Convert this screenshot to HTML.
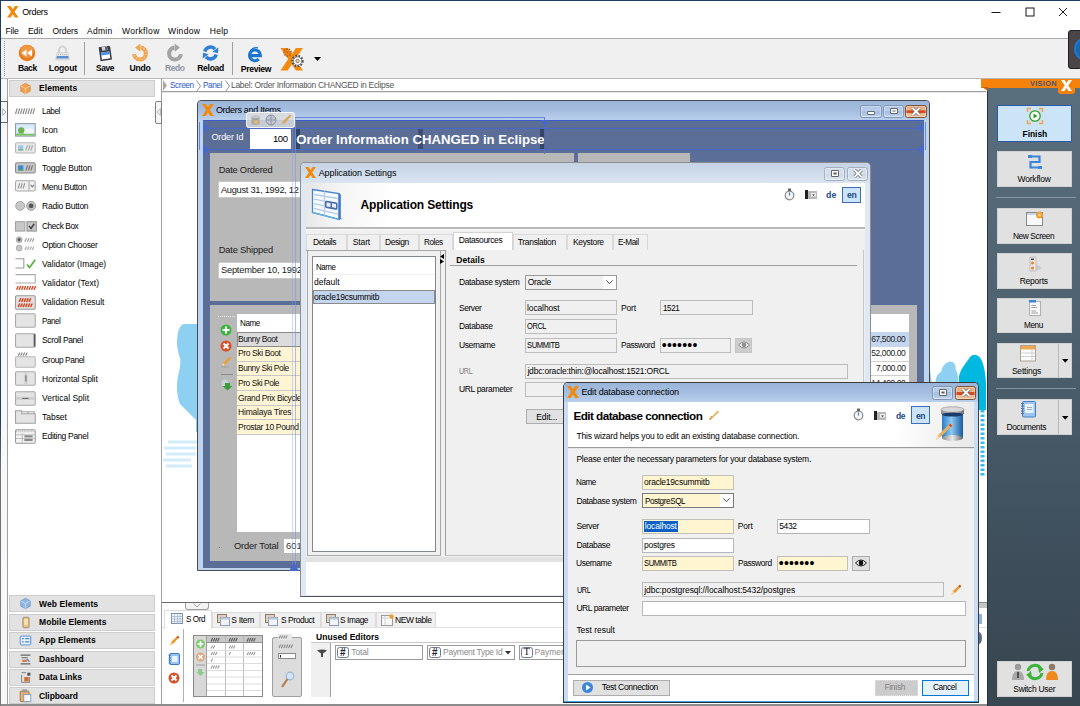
<!DOCTYPE html><html><head><meta charset="utf-8"><title>Orders</title><style>
*{box-sizing:border-box;margin:0;padding:0}
html,body{width:1080px;height:706px;overflow:hidden;background:#fff}
body{font-family:"Liberation Sans",sans-serif;font-size:8.5px;color:#000;position:relative}
div,svg{position:absolute}
svg{overflow:visible}
.t{white-space:nowrap}
.w{overflow:hidden}
.f{border:1px solid #b4b6ba;background:#fff}
.fd{border:1px solid #bcbcbc;background:#f0f0f0}
.fy{border:1px solid #c2c0b8;background:#fff5d0}
.btn{border:1px solid #adadad;background:#e1e1e1}
</style></head><body>
<div style="left:0px;top:0px;width:1080px;height:1px;background:#1d3c5f"></div>
<div style="left:0px;top:0px;width:1px;height:706px;background:linear-gradient(#1d3c5f 0,#1d3c5f 420px,#6a6f78 470px,#777 100%)"></div>
<svg style="left:7px;top:6px;" width="11.5" height="11.5" viewBox="0 0 12 12"><path d="M0 0H3.8L6 3.3L8.2 0H12L7.9 5.9L12 12H8.2L6 8.6L3.8 12H0L4.1 5.9Z" fill="#f28a0e"/></svg>
<div class="t" style="left:22.2px;top:7px;font-size:9px;line-height:10px;letter-spacing:-0.34px;">Orders</div>
<svg style="left:990px;top:6px;" width="12" height="12" viewBox="0 0 12 12"><path d="M1.5 6.5H10.5" stroke="#000" stroke-width=".9"/></svg>
<svg style="left:1024px;top:6px;" width="12" height="12" viewBox="0 0 12 12"><rect x="2" y="2" width="8" height="8" fill="none" stroke="#000" stroke-width=".9"/></svg>
<svg style="left:1057px;top:6px;" width="12" height="12" viewBox="0 0 12 12"><path d="M2 2L10 10M10 2L2 10" stroke="#000" stroke-width=".9"/></svg>
<div class="t" style="left:5.5px;top:26px;font-size:8.5px;line-height:10px;letter-spacing:-0.16px;">File</div>
<div class="t" style="left:27.9px;top:26px;font-size:8.5px;line-height:10px;letter-spacing:0.02px;">Edit</div>
<div class="t" style="left:52.6px;top:26px;font-size:8.5px;line-height:10px;letter-spacing:-0.12px;">Orders</div>
<div class="t" style="left:86.9px;top:26px;font-size:8.5px;line-height:10px;letter-spacing:0.33px;">Admin</div>
<div class="t" style="left:121.5px;top:26px;font-size:8.5px;line-height:10px;letter-spacing:0.34px;transform:scaleX(1.003);transform-origin:0px 50%;">Workflow</div>
<div class="t" style="left:168px;top:26px;font-size:8.5px;line-height:10px;letter-spacing:0.34px;transform:scaleX(1.002);transform-origin:0px 50%;">Window</div>
<div class="t" style="left:209.7px;top:26px;font-size:8.5px;line-height:10px;letter-spacing:0.31px;">Help</div>
<div style="left:1px;top:38px;width:1079px;height:41px;background:#f0f0f0;border-top:1px solid #a8a8a8;border-bottom:1px solid #b8b8b8"></div>
<div style="left:4px;top:41px;width:1px;height:35px;border-left:1px dotted #9a9a9a"></div>
<div style="left:84px;top:42px;width:1px;height:33px;background:#a0a0a0"></div>
<div style="left:232px;top:42px;width:1px;height:33px;background:#a0a0a0"></div>
<svg style="left:18px;top:44px;" width="18" height="18" viewBox="0 0 18 18"><circle cx="9" cy="9" r="8.3" fill="#e87a1c"/><circle cx="9" cy="7.5" r="6.5" fill="#f8b060" opacity=".55"/><path d="M3.5 9L8.5 5.5V12.5ZM9 9L14 5.5V12.5Z" fill="#fff"/></svg>
<div class="t" style="left:17.9px;top:63px;font-size:8.6px;line-height:10px;letter-spacing:-0.43px;font-weight:bold;color:#000;transform:scaleX(0.996);transform-origin:0px 50%;">Back</div>
<svg style="left:54px;top:44px;" width="17" height="18" viewBox="0 0 17 18"><path d="M5 9V6A3.5 3.5 0 0 1 12 6V9" fill="none" stroke="#d4d4d4" stroke-width="2.2"/><path d="M3 8.5H14L15.500 16H1.500Z" fill="#e2e2e2" stroke="#cfcfcf" stroke-width=".6"/><path d="M2.800 12H14.200L14.700 14.500H2.300Z" fill="#5a8ed0"/><path d="M4 10.500H13" stroke="#c4c4c4" stroke-width="1" stroke-dasharray="1 1"/></svg>
<div class="t" style="left:48.8px;top:63px;font-size:8.6px;line-height:10px;letter-spacing:-0.15px;font-weight:bold;color:#000;">Logout</div>
<svg style="left:97px;top:43.5px;" width="16" height="19" viewBox="0 0 16 19"><g transform="rotate(-8 8 9)"><path d="M2.500 2.500H13L14 3.500V16.500H2.500Z" fill="#3c3c44"/><rect x="4" y="8" width="8.500" height="7" fill="#fff"/><rect x="4" y="8" width="8.500" height="3" fill="#4c90e0"/><rect x="5.500" y="2.500" width="5.500" height="4" fill="#d0d4dc"/><rect x="9" y="3" width="1.500" height="3" fill="#3c3c44"/></g></svg>
<div class="t" style="left:96.1px;top:63px;font-size:8.6px;line-height:10px;letter-spacing:-0.43px;font-weight:bold;color:#000;transform:scaleX(0.979);transform-origin:0px 50%;">Save</div>
<svg style="transform:scale(1.14);left:130.5px;top:43.5px;" width="18" height="18" viewBox="0 0 18 18"><path d="M9.5 4.3A5.2 5.2 0 1 1 3.8 10.0" fill="none" stroke="#f0a552" stroke-width="3.6"/><path d="M9.3 0.7L9.1 7.9L4.7 4.1Z" fill="#f0a552"/><path d="M9.5 4.3A5.2 5.2 0 1 1 3.8 10.0" fill="none" stroke="#f8c88c" stroke-width="1.2" stroke-dasharray="1 1.6"/></svg>
<div class="t" style="left:129.5px;top:63px;font-size:8.6px;line-height:10px;letter-spacing:-0.22px;font-weight:bold;color:#000;">Undo</div>
<svg style="transform:scale(1.14);left:166px;top:43.5px;" width="18" height="18" viewBox="0 0 18 18"><path d="M8.5 4.3A5.2 5.2 0 1 0 14.2 10.0" fill="none" stroke="#a4a4a4" stroke-width="3.6"/><path d="M8.7 0.7L8.9 7.9L13.3 4.1Z" fill="#a4a4a4"/></svg>
<div class="t" style="left:164.9px;top:63px;font-size:8.6px;line-height:10px;letter-spacing:-0.43px;font-weight:bold;color:#8d96a6;transform:scaleX(0.995);transform-origin:0px 50%;">Redo</div>
<svg style="transform:scale(1.1);left:202px;top:44px;" width="17" height="18" viewBox="0 0 17 18"><path d="M3.3 7.6A5.4 5.4 0 0 1 12.6 5.5" fill="none" stroke="#2f7fd8" stroke-width="3.2"/><path d="M15.6 4.0L10.2 7.8L15.3 9.3Z" fill="#2f7fd8"/><path d="M13.7 10.4A5.4 5.4 0 0 1 4.4 12.5" fill="none" stroke="#2f7fd8" stroke-width="3.2"/><path d="M1.4 14.0L6.8 10.2L1.7 8.7Z" fill="#2f7fd8"/></svg>
<div class="t" style="left:197.2px;top:63px;font-size:8.6px;line-height:10px;letter-spacing:-0.31px;font-weight:bold;color:#000;">Reload</div>
<svg style="left:247px;top:46px;" width="16" height="17" viewBox="0 0 16 17"><path d="M3.200 9.600H13.400A5.400 5.400 0 1 0 11.800 13.200" stroke="#1b76d2" stroke-width="3.100" fill="none"/><path d="M2 7.500C3 3 7 1 11 1.800" stroke="#1b76d2" stroke-width="1.200" fill="none"/></svg>
<div class="t" style="left:240.7px;top:64px;font-size:8.6px;line-height:10px;letter-spacing:-0.27px;font-weight:bold;color:#000;">Preview</div>
<svg style="left:279.5px;top:47.5px;" width="23.5" height="22.5" viewBox="0 0 12 12"><path d="M0 0H3.8L6 3.3L8.2 0H12L7.9 5.9L12 12H8.2L6 8.6L3.8 12H0L4.1 5.9Z" fill="#f28a0e"/></svg>
<svg style="left:282px;top:47px;" width="24" height="24" viewBox="0 0 24 24"><circle cx="5.500" cy="5.500" r="3.400" fill="none" stroke="#b8601c" stroke-width="2" stroke-dasharray="1.300 1.100"/><circle cx="5.500" cy="5.500" r="1" fill="#b8601c"/><circle cx="15.500" cy="14" r="5.200" fill="#fff" stroke="#4a4a4a" stroke-width="1.900" stroke-dasharray="1.700 1.400"/><circle cx="15.500" cy="14" r="4.200" fill="#fff" stroke="#4a4a4a" stroke-width=".7"/><circle cx="15.500" cy="14" r="1.700" fill="#fbd8a8" stroke="#4a4a4a" stroke-width=".7"/></svg>
<svg style="left:314px;top:57px;" width="7" height="4" viewBox="0 0 7 4"><path d="M0 0H7L3.5 4Z" fill="#000"/></svg>
<div style="left:1068px;top:30px;width:14px;height:39px;background:#4b4548;border:1px solid #1e1e28;border-radius:3px"></div>
<div style="left:1074px;top:38px;width:20px;height:22px;border:2px solid #1a7ad8;border-radius:50%;background:#1d66a8"></div>
<div style="left:1px;top:79px;width:7px;height:627px;background:#f8f8f8"></div>
<div style="left:7px;top:79px;width:155px;height:627px;background:#fff;border-left:1px solid #a0a0a0;border-right:1px solid #a0a0a0"></div>
<div style="left:1px;top:100.5px;width:7px;height:22.5px;background:#f6f6f6;border:1px solid #6a6a6a;border-left:none"></div>
<svg style="left:2px;top:108px;" width="5" height="8" viewBox="0 0 5 8"><path d="M0.5 0.5L4 4L0.5 7.5Z" fill="#ececec" stroke="#b0b0b0" stroke-width=".8"/></svg>
<div style="left:155px;top:101px;width:7px;height:23px;background:#f6f6f6;border:1px solid #808080;border-radius:2px 0 0 2px"></div>
<svg style="left:156px;top:108px;" width="5" height="8" viewBox="0 0 5 8"><path d="M4.5 0.5L1 4L4.5 7.5Z" fill="#ececec" stroke="#b0b0b0" stroke-width=".8"/></svg>
<div style="left:9px;top:80px;width:146px;height:17px;background:#e2e2e2;border:1px solid #cdcdcd"></div>
<svg style="transform:scale(.88);left:19px;top:82px" width="13" height="13" viewBox="0 0 13 13"><path d="M6.5 0.5L12 3.5V9.5L6.5 12.5L1 9.5V3.5Z" fill="#f0a050" stroke="#d8802a" stroke-width=".6"/><path d="M1 3.5L6.5 6.5L12 3.5M6.5 6.5V12.5" stroke="#fbe0c0" stroke-width=".8" fill="none"/></svg>
<div class="t" style="left:39.1px;top:83px;font-size:8.5px;line-height:10px;letter-spacing:0.04px;font-weight:bold;">Elements</div>
<div style="left:9px;top:595px;width:146px;height:17px;background:#e2e2e2;border:1px solid #cdcdcd"></div>
<svg style="transform:scale(.88);left:19px;top:597px" width="13" height="13" viewBox="0 0 13 13"><path d="M6.5 0.5L12 3.5V9.5L6.5 12.5L1 9.5V3.5Z" fill="#8fb4de" stroke="#5a86c0" stroke-width=".6"/><path d="M1 3.5L6.5 6.5L12 3.5M6.5 6.5V12.5" stroke="#dce9f8" stroke-width=".8" fill="none"/></svg>
<div class="t" style="left:39.1px;top:599px;font-size:8.5px;line-height:10px;letter-spacing:0.09px;font-weight:bold;">Web Elements</div>
<div style="left:9px;top:614px;width:146px;height:17px;background:#e2e2e2;border:1px solid #cdcdcd"></div>
<svg style="transform:scale(.88);left:22px;top:616px" width="8" height="13" viewBox="0 0 8 13"><rect x=".5" y=".5" width="7" height="12" rx="1" fill="#f0c070" stroke="#8a8a8a"/><rect x="2" y="2.5" width="4" height="7" fill="#fbe4b0"/></svg>
<div class="t" style="left:39.1px;top:617px;font-size:8.5px;line-height:10px;letter-spacing:0.02px;font-weight:bold;">Mobile Elements</div>
<div style="left:9px;top:632px;width:146px;height:17px;background:#e2e2e2;border:1px solid #cdcdcd"></div>
<svg style="transform:scale(.88);left:19px;top:635px" width="13" height="11" viewBox="0 0 13 11"><rect x=".5" y=".5" width="12" height="10" rx="1" fill="#e8f1fc" stroke="#4a88d8"/><path d="M2.5 3.5H4.5M6 3.5H11M2.5 7H4.5M6 7H11" stroke="#4a88d8" stroke-width="1.4"/></svg>
<div class="t" style="left:39.1px;top:635px;font-size:8.5px;line-height:10px;letter-spacing:-0.01px;font-weight:bold;">App Elements</div>
<div style="left:9px;top:650.5px;width:146px;height:17px;background:#e2e2e2;border:1px solid #cdcdcd"></div>
<svg style="transform:scale(.88);left:19px;top:652.5px" width="13" height="13" viewBox="0 0 13 13"><path d="M1 1.5H12M2 4.5H9M1 11.5H12" stroke="#666" stroke-width="1.2"/><path d="M3 8H8" stroke="#e0702a" stroke-width="2.4"/><path d="M8 6L11 9" stroke="#4a88d8" stroke-width="1.6"/></svg>
<div class="t" style="left:39.1px;top:654px;font-size:8.5px;line-height:10px;letter-spacing:0.01px;font-weight:bold;">Dashboard</div>
<div style="left:9px;top:669px;width:146px;height:17px;background:#e2e2e2;border:1px solid #cdcdcd"></div>
<svg style="transform:scale(.88);left:20px;top:671px" width="12" height="13" viewBox="0 0 12 13"><path d="M1 1H6M1 3.5V12H10V6" stroke="#777" fill="none"/><rect x="4" y="6" width="5" height="5" fill="#d86a2a"/><rect x="7.5" y="1" width="3.5" height="3.5" fill="#555"/></svg>
<div class="t" style="left:39.1px;top:672px;font-size:8.5px;line-height:10px;letter-spacing:-0.02px;font-weight:bold;">Data Links</div>
<div style="left:9px;top:687px;width:146px;height:17px;background:#e2e2e2;border:1px solid #cdcdcd"></div>
<svg style="transform:scale(.88);left:19px;top:688px" width="13" height="15" viewBox="0 0 13 15"><rect x=".5" y="2.5" width="10" height="12" rx="1" fill="#e8b070" stroke="#a86a2a"/><rect x="3" y=".5" width="5" height="3.5" fill="#999"/><rect x="4.5" y="6.5" width="8" height="8" fill="#f8f8f8" stroke="#7a9ac8"/></svg>
<div class="t" style="left:39.1px;top:691px;font-size:8.5px;line-height:10px;letter-spacing:-0.11px;font-weight:bold;">Clipboard</div>
<svg style="left:14.8px;top:102px;" width="21.8" height="16.8" viewBox="0 0 21 16"><path transform="translate(0.5 6)" d="M1.6 0L0 5.5M4 0L2.4 5.5M6.4 0L4.8 5.5M8.8 0L7.2 5.5M11.2 0L9.6 5.5M13.6 0L12 5.5M16 0L14.4 5.5M18.4 0L16.8 5.5" stroke="#8a8a8a" stroke-width="1.1" fill="none"/></svg>
<div class="t" style="left:42.1px;top:106px;font-size:8.5px;line-height:10px;letter-spacing:-0.43px;transform:scaleX(0.963);transform-origin:0px 50%;">Label</div>
<svg style="left:14.8px;top:122px;" width="21.8" height="16.8" viewBox="0 0 21 16"><rect x=".5" y="1.5" width="19" height="12" fill="#d8ebfa" stroke="#8a9aa8"/><path d="M1 11H19V13H1Z" fill="#7cc060"/><circle cx="6" cy="8" r="3" fill="#6fb050"/><path d="M9 9Q13 3 18 8V11H9Z" fill="#f4f8fc"/></svg>
<div class="t" style="left:42.1px;top:125px;font-size:8.5px;line-height:10px;letter-spacing:-0.15px;">Icon</div>
<svg style="left:14.8px;top:140px;" width="21.8" height="16.8" viewBox="0 0 21 16"><rect x=".5" y="2.5" width="19" height="10" rx="1.5" fill="#e8e8e8" stroke="#b8b8b8"/><rect x="3" y="5" width="5" height="5" fill="#9cc8e8"/><path d="M3 9H8V10H3Z" fill="#6a6"/><path transform="translate(10.5 5)" d="M1.6 0L0 5M4 0L2.4 5M6.4 0L4.8 5" stroke="#aaa" stroke-width="1.1" fill="none"/></svg>
<div class="t" style="left:42.1px;top:144px;font-size:8.5px;line-height:10px;letter-spacing:-0.19px;">Button</div>
<svg style="left:14.8px;top:160px;" width="21.8" height="16.8" viewBox="0 0 21 16"><rect x=".5" y="2.5" width="19" height="10" rx="1.5" fill="#c8c8c8" stroke="#8a8a8a"/><rect x="3" y="5" width="5" height="5" fill="#3a8ad8"/><path d="M3 9H8V10H3Z" fill="#4a4"/><path transform="translate(10.5 5)" d="M1.6 0L0 5M4 0L2.4 5M6.4 0L4.8 5" stroke="#777" stroke-width="1.1" fill="none"/></svg>
<div class="t" style="left:42.1px;top:163px;font-size:8.5px;line-height:10px;letter-spacing:-0.17px;">Toggle Button</div>
<svg style="left:14.8px;top:178px;" width="21.8" height="16.8" viewBox="0 0 21 16"><rect x=".5" y="2.5" width="19" height="10" rx="1.5" fill="#f0f0f0" stroke="#a8a8a8"/><path d="M13.5 3V12" stroke="#a8a8a8"/><path d="M15 6.5L16.7 8.5L18.4 6.5" stroke="#777" fill="none"/><path transform="translate(3 5)" d="M1.6 0L0 5M4 0L2.4 5M6.4 0L4.8 5" stroke="#999" stroke-width="1.1" fill="none"/></svg>
<div class="t" style="left:42.1px;top:182px;font-size:8.5px;line-height:10px;letter-spacing:-0.33px;">Menu Button</div>
<svg style="left:14.8px;top:198px;" width="21.8" height="16.8" viewBox="0 0 21 16"><circle cx="5" cy="7.5" r="4.3" fill="#c8c8c8" stroke="#9a9a9a" stroke-width=".8"/><circle cx="15.5" cy="7.5" r="4.3" fill="#c8c8c8" stroke="#8a8a8a" stroke-width=".8"/><circle cx="15.5" cy="7.5" r="2.3" fill="#555"/></svg>
<div class="t" style="left:42.1px;top:201px;font-size:8.5px;line-height:10px;letter-spacing:-0.24px;">Radio Button</div>
<svg style="left:14.8px;top:218px;" width="21.8" height="16.8" viewBox="0 0 21 16"><rect x=".5" y="3.5" width="9" height="9" fill="#c8c8c8" stroke="#a0a0a0"/><rect x="11.5" y="3.5" width="9" height="9" fill="#c8c8c8" stroke="#909090"/><path d="M13.5 7.5L15.5 10L18.5 5.5" stroke="#444" stroke-width="1.5" fill="none"/></svg>
<div class="t" style="left:42.1px;top:221px;font-size:8.5px;line-height:10px;letter-spacing:-0.43px;transform:scaleX(0.976);transform-origin:0px 50%;">Check Box</div>
<svg style="left:14.8px;top:236px;" width="21.8" height="16.8" viewBox="0 0 21 16"><circle cx="4" cy="3.5" r="2.8" fill="#c0c0c0" stroke="#999" stroke-width=".7"/><circle cx="4" cy="3.5" r="1.4" fill="#555"/><circle cx="4" cy="11.5" r="2.8" fill="#c8c8c8" stroke="#999" stroke-width=".7"/><path transform="translate(9.5 2)" d="M1.6 0L0 3.5M4 0L2.4 3.5M6.4 0L4.8 3.5M8.8 0L7.2 3.5" stroke="#999" stroke-width="1.1" fill="none"/><path transform="translate(9.5 10)" d="M1.6 0L0 3.5M4 0L2.4 3.5M6.4 0L4.8 3.5M8.8 0L7.2 3.5" stroke="#aaa" stroke-width="1.1" fill="none"/></svg>
<div class="t" style="left:42.1px;top:240px;font-size:8.5px;line-height:10px;letter-spacing:-0.29px;">Option Chooser</div>
<svg style="left:14.8px;top:256px;" width="21.8" height="16.8" viewBox="0 0 21 16"><path d="M.5 2.5H8.5V11.5H.5" fill="#fff" stroke="#999"/><path d="M11.5 8L14 11L19.5 3.5" stroke="#4cb030" stroke-width="1.5" fill="none"/></svg>
<div class="t" style="left:42.1px;top:259px;font-size:8.5px;line-height:10px;letter-spacing:-0.03px;">Validator (Image)</div>
<svg style="left:14.8px;top:274px;" width="21.8" height="16.8" viewBox="0 0 21 16"><path d="M.5 .5H19.5V8.5H.5" fill="#fff" stroke="#aaa"/><path transform="translate(1.5 11.5)" d="M1.6 0L0 3.5M4 0L2.4 3.5M6.4 0L4.8 3.5M8.8 0L7.2 3.5M11.2 0L9.6 3.5M13.6 0L12 3.5M16 0L14.4 3.5M18.4 0L16.8 3.5" stroke="#d8401a" stroke-width="1.3" fill="none"/></svg>
<div class="t" style="left:42.1px;top:278px;font-size:8.5px;line-height:10px;letter-spacing:0.03px;">Validator (Text)</div>
<svg style="left:14.8px;top:294px;" width="21.8" height="16.8" viewBox="0 0 21 16"><rect x="0.5" y="1.5" width="19" height="13" rx="1" fill="#e0e0e0" stroke="#999"/><path transform="translate(4 4)" d="M1.6 0L0 3.5M4 0L2.4 3.5M6.4 0L4.8 3.5M8.8 0L7.2 3.5M11.2 0L9.6 3.5" stroke="#d8401a" stroke-width="1.4" fill="none"/><path transform="translate(3 9)" d="M1.6 0L0 3.5M4 0L2.4 3.5M6.4 0L4.8 3.5M8.8 0L7.2 3.5M11.2 0L9.6 3.5M13.6 0L12 3.5" stroke="#d8401a" stroke-width="1.4" fill="none"/></svg>
<div class="t" style="left:42.1px;top:297px;font-size:8.5px;line-height:10px;letter-spacing:-0.05px;">Validation Result</div>
<svg style="left:14.8px;top:312px;" width="21.8" height="16.8" viewBox="0 0 21 16"><rect x="0.5" y="1.5" width="19" height="13" rx="1" fill="#e4e4e4" stroke="#a8a8a8"/></svg>
<div class="t" style="left:42.1px;top:316px;font-size:8.5px;line-height:10px;letter-spacing:-0.43px;transform:scaleX(0.943);transform-origin:0px 50%;">Panel</div>
<svg style="left:14.8px;top:332px;" width="21.8" height="16.8" viewBox="0 0 21 16"><rect x="0.5" y="1.5" width="19" height="13" rx="1" fill="#e4e4e4" stroke="#a8a8a8"/><rect x="18" y="2" width="1.5" height="12" fill="#555"/></svg>
<div class="t" style="left:42.1px;top:335px;font-size:8.5px;line-height:10px;letter-spacing:-0.4px;">Scroll Panel</div>
<svg style="left:14.8px;top:352px;" width="21.8" height="16.8" viewBox="0 0 21 16"><rect x="0.5" y="4.5" width="19" height="10" rx="1" fill="#e4e4e4" stroke="#b8b8b8"/><path transform="translate(3 0.5)" d="M1.6 0L0 3M4 0L2.4 3M6.4 0L4.8 3M8.8 0L7.2 3" stroke="#888" stroke-width="1.1" fill="none"/></svg>
<div class="t" style="left:42.1px;top:355px;font-size:8.5px;line-height:10px;letter-spacing:-0.43px;transform:scaleX(0.984);transform-origin:0px 50%;">Group Panel</div>
<svg style="left:14.8px;top:370px;" width="21.8" height="16.8" viewBox="0 0 21 16"><rect x="0.5" y="1.5" width="19" height="13" rx="1" fill="#e4e4e4" stroke="#a8a8a8"/><rect x="9" y="2" width="3" height="12" fill="#d0d0d0"/><path d="M10.5 5V11" stroke="#666"/></svg>
<div class="t" style="left:42.1px;top:374px;font-size:8.5px;line-height:10px;letter-spacing:-0.1px;">Horizontal Split</div>
<svg style="left:14.8px;top:390px;" width="21.8" height="16.8" viewBox="0 0 21 16"><rect x="0.5" y="1.5" width="19" height="13" rx="1" fill="#e4e4e4" stroke="#a8a8a8"/><rect x="1" y="6.5" width="18" height="3" fill="#d0d0d0"/><path d="M7 8H13" stroke="#666"/></svg>
<div class="t" style="left:42.1px;top:393px;font-size:8.5px;line-height:10px;letter-spacing:0.01px;">Vertical Split</div>
<svg style="left:14.8px;top:408px;" width="21.8" height="16.8" viewBox="0 0 21 16"><path d="M.5 14.5V2.5H6.5V5.5H19.5V14.5Z" fill="#e4e4e4" stroke="#a0a0a0"/><path d="M6.5 3.5H18.5V5.5M12.5 3.5V5.5" stroke="#a0a0a0" fill="none"/></svg>
<div class="t" style="left:42.1px;top:412px;font-size:8.5px;line-height:10px;letter-spacing:-0.05px;">Tabset</div>
<svg style="left:14.8px;top:428px;" width="21.8" height="16.8" viewBox="0 0 21 16"><rect x="0.5" y="1.5" width="19" height="13" rx="1" fill="#f4f4f4" stroke="#999"/><path d="M1 3H19" stroke="#bbb" stroke-dasharray="1 1" stroke-width="2"/><path d="M1 6.5H19M1 10H19M7 5V14" stroke="#aaa" stroke-width=".7"/><rect x="9" y="7" width="8" height="2" fill="#888"/><rect x="9" y="10.5" width="8" height="2" fill="#888"/></svg>
<div class="t" style="left:42.1px;top:431px;font-size:8.5px;line-height:10px;letter-spacing:-0.3px;">Editing Panel</div>
<div style="left:162px;top:79px;width:824px;height:13px;background:#fff;border-bottom:1px solid #a0a0a0"></div>
<svg style="left:163px;top:80px;" width="5" height="11" viewBox="0 0 5 11"><path d="M0 0L4 5.5L0 11Z" fill="#a8a8a8"/></svg>
<div class="t" style="left:169.7px;top:80px;font-size:8.5px;line-height:10px;letter-spacing:-0.43px;color:#2a58c8;transform:scaleX(0.972);transform-origin:0px 50%;">Screen</div>
<svg style="left:196px;top:79.5px;" width="5" height="12" viewBox="0 0 5 12"><path d="M0.5 0.5L4.5 6L0.5 11.5" stroke="#888" fill="none" stroke-width=".9"/></svg>
<div class="t" style="left:202.6px;top:80px;font-size:8.5px;line-height:10px;letter-spacing:-0.43px;color:#2a58c8;transform:scaleX(0.963);transform-origin:0px 50%;">Panel</div>
<svg style="left:225px;top:79.5px;" width="5" height="12" viewBox="0 0 5 12"><path d="M0.5 0.5L4.5 6L0.5 11.5" stroke="#888" fill="none" stroke-width=".9"/></svg>
<div class="t" style="left:231px;top:80px;font-size:8.5px;line-height:10px;letter-spacing:-0.3px;color:#555;">Label: Order Information CHANGED in Eclipse</div>
<div style="left:162px;top:92px;width:824px;height:1px;background:#e8e8e8"></div>
<svg style="left:160px;top:300px;" width="40" height="200" viewBox="0 0 40 200"><path d="M38 24H24C20 25 18 30 17.500 36C16 44 18 52 20 58C21 63 20 68 18 76C16 86 17 96 20 104L36 120V132H38Z" fill="#8dd0f2"/><path d="M8 142h29M4 148h32M6 154h30M3 160h28M6 166h26" stroke="#d4ecf9" stroke-width="3"/></svg>
<svg style="left:925px;top:340px;" width="62" height="366" viewBox="0 0 62 366"><path d="M10.500 60V44C10.500 38 12 34 16 32C17 27 20 22 25 21.500C29 21.500 31 25 30.500 29C32 31 33.500 36 33.500 44V60Z" fill="#8dd0f2"/><path d="M5 30L7 44H5Z" fill="#8dd0f2"/><path d="M34 60V36C36 28 42 22 45 17C50 12 56 16 58 24C60 30 61 40 61 46V70H53V60Z" fill="#00b8e0"/><path d="M57.5 70V136" stroke="#1eb0e0" stroke-width="4" stroke-dasharray="2.500 2" opacity=".85"/></svg>
<div style="left:197px;top:100px;width:733px;height:471px;background:#bdd3ee;border:1px solid #4a4a4a;border-radius:4px 4px 0 0"></div>
<div style="left:198px;top:101px;width:731px;height:19px;background:linear-gradient(#9bb5d9,#a5bee0 50%,#b9d0ec);border-radius:4px 4px 0 0"></div>
<svg style="left:202px;top:104px;" width="12" height="12" viewBox="0 0 12 12"><path d="M0 0H3.8L6 3.3L8.2 0H12L7.9 5.9L12 12H8.2L6 8.6L3.8 12H0L4.1 5.9Z" fill="#f28a0e"/></svg>
<div class="t" style="left:215.9px;top:105px;font-size:9px;line-height:10px;letter-spacing:-0.29px;">Orders and Items</div>
<div style="left:860px;top:104.5px;width:21.5px;height:13px;background:linear-gradient(#aec7e6,#b9d0ec 40%,#a3bfe2 46%,#a9c4e5 70%,#c3d8f1);border:1px solid #8196b4;border-radius:2.5px;box-shadow:inset 0 0 0 1px rgba(255,255,255,.35)"></div>
<div style="left:866.5px;top:111px;width:8.5px;height:3.5px;background:#fff;border:1px solid #6a6a6a;border-radius:1px"></div>
<div style="left:882.5px;top:104.5px;width:21.5px;height:13px;background:linear-gradient(#aec7e6,#b9d0ec 40%,#a3bfe2 46%,#a9c4e5 70%,#c3d8f1);border:1px solid #8196b4;border-radius:2.5px;box-shadow:inset 0 0 0 1px rgba(255,255,255,.35)"></div>
<div style="left:889.5px;top:107.5px;width:8px;height:6.5px;background:#5a5a66;border:1px solid #666;box-shadow:inset 0 0 0 1.4px #fff;border-radius:1px"></div>
<div style="left:905px;top:104.5px;width:21.5px;height:13px;background:linear-gradient(#e6a574,#ebb58c 38%,#d84a1e 42%,#d84a1e 64%,#ecb890 68%,#f0c09a);border:1px solid #7e5238;border-radius:2.5px;box-shadow:inset 0 0 0 1px rgba(255,255,255,.35)"></div>
<svg style="left:911px;top:106.5px;" width="10" height="9" viewBox="0 0 10 9"><path d="M1.5 1L8.5 8M8.5 1L1.5 8" stroke="#6a6a6a" stroke-width="3.2"/><path d="M1.5 1L8.5 8M8.5 1L1.5 8" stroke="#fff" stroke-width="1.8"/></svg>
<div style="left:203px;top:120px;width:721px;height:448px;background:#5b6e98;border-top:1px solid #3c5cc8"></div>
<div class="t" style="left:211.4px;top:132px;font-size:9px;line-height:10px;letter-spacing:-0.13px;color:#fff;">Order Id</div>
<div style="left:250px;top:128px;width:41px;height:21px;background:#fff"></div>
<div class="t" style="left:272.6px;top:133px;font-size:9.6px;line-height:11px;letter-spacing:-0.48px;transform:scaleX(0.996);transform-origin:0px 50%;">100</div>
<div style="left:296px;top:128px;width:4px;height:21px;background:rgba(40,55,80,.75)"></div>
<div style="left:418px;top:128px;width:5px;height:21px;background:rgba(40,55,80,.55)"></div>
<div style="left:540px;top:128px;width:5px;height:21px;background:rgba(40,55,80,.75)"></div>
<div class="t" style="left:296.3px;top:132px;font-size:13.2px;line-height:15px;letter-spacing:0.02px;font-weight:bold;color:#fff;">Order Information CHANGED in Eclipse</div>
<div style="left:210px;top:153px;width:364px;height:148px;background:#b8b8b8"></div>
<div style="left:578px;top:153px;width:112px;height:148px;background:#b8b8b8"></div>
<div style="left:210px;top:305px;width:707px;height:256px;background:#b8b8b8"></div>
<div class="t" style="left:218.7px;top:165px;font-size:9.3px;line-height:10px;letter-spacing:-0.21px;color:#1a1a1a;">Date Ordered</div>
<div style="left:217.5px;top:181px;width:140px;height:17px;background:#fff;border:1px solid #cacaca;border-radius:2px"></div>
<div class="t" style="left:220.9px;top:185px;font-size:9.3px;line-height:10px;letter-spacing:-0.29px;color:#1a1a1a;">August 31, 1992, 12</div>
<div class="t" style="left:218.7px;top:245px;font-size:9.3px;line-height:10px;letter-spacing:-0.17px;color:#1a1a1a;">Date Shipped</div>
<div style="left:217.5px;top:261.5px;width:140px;height:17px;background:#fff;border:1px solid #cacaca;border-radius:2px"></div>
<div class="t" style="left:220.9px;top:265px;font-size:9.3px;line-height:10px;letter-spacing:-0.19px;color:#1a1a1a;">September 10, 1992</div>
<div style="left:218px;top:316px;width:17px;height:1px;border-top:1px dotted #e8e8e8"></div>
<svg style="left:220px;top:324px;" width="12" height="12" viewBox="0 0 12 12"><circle cx="6" cy="6" r="5.5" fill="#3cb43c"/><path d="M6 2.5V9.5M2.5 6H9.5" stroke="#fff" stroke-width="2"/></svg>
<svg style="left:220px;top:340px;" width="12" height="12" viewBox="0 0 12 12"><circle cx="6" cy="6" r="5.5" fill="#d8502a"/><path d="M3.5 3.5L8.5 8.5M8.5 3.5L3.5 8.5" stroke="#fff" stroke-width="2"/></svg>
<svg style="left:220px;top:355px;" width="13" height="13" viewBox="0 0 13 13"><path d="M2 11L3 8L9.5 1.5L11.5 3.5L5 10Z" fill="#e8a040"/><path d="M2 11L3 8L5 10Z" fill="#f0d8b0"/><path d="M1 12H9" stroke="#999" stroke-width=".8"/></svg>
<div style="left:221px;top:374px;width:12px;height:1px;background:#8a8a8a"></div>
<svg style="left:220px;top:378px;" width="13" height="13" viewBox="0 0 13 13"><circle cx="5" cy="5" r="3.5" fill="#c8d0d8"/><path d="M5 5H10V8H12.5L7.5 12.5L2.5 8H5Z" fill="#3c9c3c"/></svg>
<div style="left:237px;top:314px;width:671.5px;height:218px;background:#fff"></div>
<div class="t" style="left:240.1px;top:318px;font-size:8.5px;line-height:10px;letter-spacing:-0.43px;transform:scaleX(0.953);transform-origin:0px 50%;">Name</div>
<div style="left:237px;top:332px;width:634px;height:15px;background:#dcdcdc;border:1px solid #8a8a8a"></div>
<div style="left:871px;top:332px;width:37.5px;height:15px;background:#c3d6ee"></div>
<div class="t" style="left:238.1px;top:334px;font-size:8.5px;line-height:10px;letter-spacing:-0.43px;color:#111;transform:scaleX(0.995);transform-origin:0px 50%;">Bunny Boot</div>
<div class="t" style="left:871.2px;top:334px;font-size:8.5px;line-height:10px;letter-spacing:-0.4px;color:#222;">67,500.00</div>
<div style="left:237px;top:347px;width:635px;height:15px;background:#fff5d5;border-bottom:1px solid #c8c8c8"></div>
<div style="left:871px;top:347px;width:37.5px;height:15px;background:#fff;border-bottom:1px solid #d0d0d0"></div>
<div class="t" style="left:238.1px;top:348px;font-size:8.5px;line-height:10px;letter-spacing:-0.4px;color:#111;">Pro Ski Boot</div>
<div class="t" style="left:871.2px;top:348px;font-size:8.5px;line-height:10px;letter-spacing:-0.4px;color:#222;">52,000.00</div>
<div style="left:237px;top:362px;width:635px;height:14px;background:#fff5d5;border-bottom:1px solid #c8c8c8"></div>
<div style="left:871px;top:362px;width:37.5px;height:14px;background:#fff;border-bottom:1px solid #d0d0d0"></div>
<div class="t" style="left:238.1px;top:363px;font-size:8.5px;line-height:10px;letter-spacing:-0.43px;color:#111;transform:scaleX(0.984);transform-origin:0px 50%;">Bunny Ski Pole</div>
<div class="t" style="left:875.8px;top:363px;font-size:8.5px;line-height:10px;letter-spacing:-0.43px;color:#222;transform:scaleX(0.996);transform-origin:0px 50%;">7,000.00</div>
<div style="left:237px;top:376px;width:635px;height:15px;background:#fff5d5;border-bottom:1px solid #c8c8c8"></div>
<div style="left:871px;top:376px;width:37.5px;height:15px;background:#fff;border-bottom:1px solid #d0d0d0"></div>
<div class="t" style="left:238.1px;top:378px;font-size:8.5px;line-height:10px;letter-spacing:-0.43px;color:#111;transform:scaleX(0.988);transform-origin:0px 50%;">Pro Ski Pole</div>
<div class="t" style="left:871.2px;top:378px;font-size:8.5px;line-height:10px;letter-spacing:-0.4px;color:#222;">14,400.00</div>
<div style="left:237px;top:391px;width:635px;height:15px;background:#fff5d5;border-bottom:1px solid #c8c8c8"></div>
<div style="left:871px;top:391px;width:37.5px;height:15px;background:#fff;border-bottom:1px solid #d0d0d0"></div>
<div class="t" style="left:238.1px;top:393px;font-size:8.5px;line-height:10px;letter-spacing:-0.38px;color:#111;">Grand Prix Bicycle</div>
<div style="left:237px;top:406px;width:635px;height:14px;background:#fff5d5;border-bottom:1px solid #c8c8c8"></div>
<div style="left:871px;top:406px;width:37.5px;height:14px;background:#fff;border-bottom:1px solid #d0d0d0"></div>
<div class="t" style="left:238.1px;top:407px;font-size:8.5px;line-height:10px;letter-spacing:-0.22px;color:#111;">Himalaya Tires</div>
<div style="left:237px;top:420px;width:635px;height:15px;background:#fff5d5;border-bottom:1px solid #c8c8c8"></div>
<div style="left:871px;top:420px;width:37.5px;height:15px;background:#fff;border-bottom:1px solid #d0d0d0"></div>
<div class="t" style="left:238.1px;top:422px;font-size:8.5px;line-height:10px;letter-spacing:-0.35px;color:#111;">Prostar 10 Pound</div>
<div class="t" style="left:233.9px;top:541px;font-size:9.3px;line-height:10px;letter-spacing:-0.12px;color:#1a1a1a;">Order Total</div>
<div style="left:219px;top:547px;width:1px;height:1px;background:#777"></div>
<div style="left:284px;top:538.5px;width:60px;height:14.5px;background:#fff"></div>
<div class="t" style="left:286.1px;top:541px;font-size:9.3px;line-height:10px;color:#333;">601</div>
<div style="left:203px;top:127.5px;width:721px;height:1px;background:#4a68c8"></div>
<div style="left:203px;top:149px;width:721px;height:1px;background:#4a68c8"></div>
<svg style="left:203px;top:122px;" width="7" height="11" viewBox="0 0 7 11"><path d="M0 0L7 5.5L0 11Z" fill="#4a68c8"/></svg>
<svg style="left:203px;top:144px;" width="7" height="11" viewBox="0 0 7 11"><path d="M0 0L7 5.5L0 11Z" fill="#4a68c8"/></svg>
<svg style="left:917px;top:122px;" width="7" height="11" viewBox="0 0 7 11"><path d="M7 0L0 5.5L7 11Z" fill="#4a68c8"/></svg>
<svg style="left:917px;top:144px;" width="7" height="11" viewBox="0 0 7 11"><path d="M7 0L0 5.5L7 11Z" fill="#4a68c8"/></svg>
<div style="left:199px;top:122px;width:1px;height:28px;background:#6a88d8"></div>
<div style="left:925px;top:122px;width:1px;height:28px;background:#6a88d8"></div>
<div style="left:292px;top:118px;width:1px;height:452px;background:rgba(130,160,235,.4)"></div>
<div style="left:295px;top:118px;width:1px;height:452px;background:rgba(120,150,230,.6)"></div>
<div style="left:544px;top:118px;width:1px;height:36px;background:rgba(80,110,210,.8)"></div>
<div style="left:295px;top:117px;width:250px;height:1px;background:#6a88e0"></div>
<svg style="left:540.5px;top:120px;" width="8" height="7" viewBox="0 0 8 7"><path d="M0 0H8L4 7Z" fill="#4a68c8"/></svg>
<svg style="left:289px;top:562px;" width="10" height="9" viewBox="0 0 10 9"><path d="M0 9H10L5 0Z" fill="#4a68c8"/></svg>
<div style="left:246px;top:112px;width:49px;height:16px;background:rgba(225,225,225,.82);border:1px solid rgba(250,250,250,.9);border-radius:3px"></div>
<svg style="left:250px;top:114px;" width="11" height="12" viewBox="0 0 11 12"><path d="M1.5 2.5H9.5V10Q5.5 12 1.5 10Z" fill="#a8a8a8"/><ellipse cx="5.5" cy="2.5" rx="4" ry="1.5" fill="#c8c8c8"/><circle cx="6" cy="8" r="2" fill="#e8b868"/></svg>
<svg style="left:265px;top:114px;" width="12" height="12" viewBox="0 0 12 12"><circle cx="6" cy="6" r="5" fill="#c0c4cc" stroke="#8a92a4"/><path d="M1 6H11M6 1V11" stroke="#8a92a4" stroke-width=".8"/></svg>
<svg style="left:280px;top:113px;" width="13" height="13" viewBox="0 0 13 13"><path d="M1.5 11.5L3 8L10 1.5L11.5 3L5 10Z" fill="#dca860"/></svg>
<div style="left:300px;top:162px;width:571px;height:435px;background:#dfe8f5;border:1px solid #8e8e8e;border-radius:5px 5px 0 0;border-bottom-color:#555"></div>
<div style="left:301px;top:163px;width:569px;height:20px;background:linear-gradient(#c5d3e5,#cfdcec 50%,#dbe5f1);border-radius:4px 4px 0 0"></div>
<svg style="left:305px;top:167px;" width="11" height="11" viewBox="0 0 12 12"><path d="M0 0H3.8L6 3.3L8.2 0H12L7.9 5.9L12 12H8.2L6 8.6L3.8 12H0L4.1 5.9Z" fill="#f28a0e"/></svg>
<div class="t" style="left:318.7px;top:168px;font-size:9px;line-height:10px;letter-spacing:-0.07px;">Application Settings</div>
<div style="left:823.5px;top:167px;width:21px;height:13.5px;background:linear-gradient(#cfdbea,#d6e1ee 45%,#ccd8e8 50%,#dde7f2);border:1px solid #a4aebc;border-radius:2.5px;box-shadow:inset 0 0 0 1px rgba(255,255,255,.35)"></div>
<div style="left:830.5px;top:170px;width:8px;height:6.5px;background:#5a5a66;border:1px solid #666;box-shadow:inset 0 0 0 1.4px #fff;border-radius:1px"></div>
<div style="left:846.5px;top:167px;width:21px;height:13.5px;background:linear-gradient(#cfdbea,#d6e1ee 45%,#ccd8e8 50%,#dde7f2);border:1px solid #a4aebc;border-radius:2.5px;box-shadow:inset 0 0 0 1px rgba(255,255,255,.35)"></div>
<svg style="left:852.5px;top:169px;" width="10" height="9" viewBox="0 0 10 9"><path d="M1.5 1L8.5 8M8.5 1L1.5 8" stroke="#6a6a6a" stroke-width="3.2"/><path d="M1.5 1L8.5 8M8.5 1L1.5 8" stroke="#fff" stroke-width="1.8"/></svg>
<div style="left:306px;top:183px;width:559px;height:412px;background:#f0f0f0"></div>
<div style="left:306px;top:183px;width:559px;height:44px;background:linear-gradient(100deg,#e6e6e6 0%,#f4f4f4 6%,#fff 16%)"></div>
<div style="left:306px;top:227px;width:559px;height:1.5px;background:#b8b8b8"></div>
<div style="left:306px;top:229px;width:559px;height:1px;background:#fafafa"></div>
<svg style="left:311px;top:187px;" width="32" height="34" viewBox="0 0 32 34"><path d="M30 33.500L32 32L30 30Z" fill="#bbb" opacity=".6"/><path d="M1.500 2.500L28 6.500V32.500L1.500 25.500Z" fill="#f6f9fd" stroke="#4a86c8" stroke-width="1.300"/><path d="M28 6.500L29.500 7.500V32L28 32.500Z" fill="#3a78c8" stroke="#3a78c8" stroke-width=".6"/><path d="M3 7.5L27 11.5M3 12.1L27 16.7M3 16.7L27 21.9M3 21.3L27 27.1M13.500 4.500V28.500" stroke="#b4cdea" stroke-width="1.300" fill="none"/><path d="M1.500 25.500L28 32.500" stroke="#56b8e8" stroke-width="1.200"/><rect x="14" y="14.500" width="12.500" height="7.500" rx="1.800" fill="#4a6eaa" transform="skewY(9) translate(0 -3.200)"/><rect x="15.500" y="16.200" width="4" height="4" fill="#e8f0fa" transform="skewY(9) translate(0 -3.200)"/><rect x="21" y="16.200" width="4" height="4" fill="#e8f0fa" transform="skewY(9) translate(0 -3.200)"/></svg>
<div class="t" style="left:360.5px;top:198px;font-size:12px;line-height:14px;letter-spacing:-0.17px;font-weight:bold;">Application Settings</div>
<svg style="left:784px;top:187.5px;" width="11" height="13" viewBox="0 0 11 13"><circle cx="5.5" cy="7.5" r="4.3" fill="#f4f4f4" stroke="#8a8a8a" stroke-width="1.2"/><rect x="4" y=".5" width="3" height="2.5" fill="#666"/><path d="M5.5 7.5V4.5" stroke="#4a7ac0" stroke-width="1.2"/></svg>
<svg style="left:805px;top:190px;" width="12" height="9" viewBox="0 0 12 9"><rect x="0" y="1" width="12" height="8" fill="#b8b8b8"/><rect x="0" y="0" width="3" height="9" fill="#222"/><rect x="6" y="3" width="5" height="3.5" fill="#eee"/><path d="M7 4.5L8.5 6L10 4.500Z" fill="#333"/></svg>
<div class="t" style="left:826.1px;top:190px;font-size:8.8px;line-height:10px;letter-spacing:-0.07px;font-weight:bold;color:#1c4a86;">de</div>
<div style="left:842px;top:187px;width:19px;height:16px;background:#cce4f7;border:1px solid #3c6cb8"></div>
<div class="t" style="left:846.5px;top:190px;font-size:8.8px;line-height:10px;letter-spacing:-0.44px;font-weight:bold;color:#1c4a86;transform:scaleX(0.987);transform-origin:0px 50%;">en</div>
<div style="left:306px;top:234px;width:41px;height:16px;background:#f0f0f0;border:1px solid #d9d9d9;border-bottom:none"></div>
<div class="t" style="left:312.9px;top:237px;font-size:8.5px;line-height:10px;letter-spacing:-0.43px;transform:scaleX(0.999);transform-origin:0px 50%;">Details</div>
<div style="left:347px;top:234px;width:33px;height:16px;background:#f0f0f0;border:1px solid #d9d9d9;border-bottom:none"></div>
<div class="t" style="left:352.8px;top:237px;font-size:8.5px;line-height:10px;letter-spacing:-0.14px;">Start</div>
<div style="left:380px;top:234px;width:39px;height:16px;background:#f0f0f0;border:1px solid #d9d9d9;border-bottom:none"></div>
<div class="t" style="left:384.9px;top:237px;font-size:8.5px;line-height:10px;letter-spacing:-0.43px;transform:scaleX(0.990);transform-origin:0px 50%;">Design</div>
<div style="left:419px;top:234px;width:34px;height:16px;background:#f0f0f0;border:1px solid #d9d9d9;border-bottom:none"></div>
<div class="t" style="left:424px;top:237px;font-size:8.5px;line-height:10px;letter-spacing:-0.43px;transform:scaleX(0.958);transform-origin:0px 50%;">Roles</div>
<div style="left:453px;top:232px;width:60px;height:19px;background:#fff;border:1px solid #d4d4d4;border-bottom:none"></div>
<div class="t" style="left:458.8px;top:235px;font-size:8.5px;line-height:10px;letter-spacing:-0.38px;">Datasources</div>
<div style="left:513px;top:234px;width:54px;height:16px;background:#f0f0f0;border:1px solid #d9d9d9;border-bottom:none"></div>
<div class="t" style="left:517.8px;top:237px;font-size:8.5px;line-height:10px;letter-spacing:-0.33px;">Translation</div>
<div style="left:567px;top:234px;width:46px;height:16px;background:#f0f0f0;border:1px solid #d9d9d9;border-bottom:none"></div>
<div class="t" style="left:573px;top:237px;font-size:8.5px;line-height:10px;letter-spacing:-0.35px;">Keystore</div>
<div style="left:613px;top:234px;width:34.5px;height:16px;background:#f0f0f0;border:1px solid #d9d9d9;border-bottom:none"></div>
<div class="t" style="left:618.2px;top:237px;font-size:8.5px;line-height:10px;letter-spacing:-0.43px;transform:scaleX(0.961);transform-origin:0px 50%;">E-Mail</div>
<div style="left:306px;top:250px;width:147px;height:1px;background:#a8a8a8"></div>
<div style="left:513px;top:250px;width:351px;height:1px;background:#a8a8a8"></div>
<div style="left:307px;top:251px;width:134px;height:305px;background:#f0f0f0;border:1px solid #a8a8a8;border-top:none"></div>
<div style="left:312px;top:256px;width:124px;height:296px;background:#fff;border:1px solid #828790"></div>
<div class="t" style="left:315.9px;top:262px;font-size:8.5px;line-height:10px;letter-spacing:-0.43px;transform:scaleX(0.934);transform-origin:0px 50%;">Name</div>
<div style="left:313px;top:274px;width:122px;height:1px;background:#f0f0f0"></div>
<div class="t" style="left:314px;top:277px;font-size:8.5px;line-height:10px;letter-spacing:0.01px;">default</div>
<div style="left:313px;top:290px;width:122px;height:14px;background:#c4d5ee;border:1px solid #8a8a8a"></div>
<div class="t" style="left:314px;top:292px;font-size:8.5px;line-height:10px;letter-spacing:-0.24px;">oracle19csummitb</div>
<svg style="left:440px;top:254px;" width="4" height="10" viewBox="0 0 4 10"><path d="M4 0L0 2.5L4 5Z" fill="#000"/><path d="M0 5L4 7.5L0 10Z" fill="#000"/></svg>
<div style="left:445px;top:250px;width:419px;height:306px;border:1px solid #a0a0a0;border-top:none;border-right-color:#c8c8c8;border-bottom-color:#c0c0c0;background:#f0f0f0"></div>
<div style="left:306px;top:557px;width:559px;height:5px;background:#e2e2e2"></div>
<div style="left:306px;top:562px;width:559px;height:33px;background:#fff"></div>
<div class="t" style="left:456.3px;top:255px;font-size:8.5px;line-height:10px;letter-spacing:0.09px;font-weight:bold;">Details</div>
<div style="left:450px;top:265px;width:407px;height:1px;background:#a0a0a0"></div>
<div class="t" style="left:458.9px;top:277px;font-size:8.5px;line-height:10px;letter-spacing:-0.34px;">Database system</div>
<div class="fd" style="left:525px;top:274.5px;width:92px;height:15px;border-color:#9a9a9a;"></div>
<div style="left:602.5px;top:275.5px;width:13.5px;height:13px;background:#fdfdfd"></div>
<svg style="left:605.5px;top:279.8px;" width="7" height="4.5" viewBox="0 0 7 4.5"><path d="M.4 .4L3.500 3.700L6.600 .4" stroke="#4a4a4a" fill="none" stroke-width="1"/></svg>
<div class="t" style="left:527.8px;top:277px;font-size:8.5px;line-height:10px;letter-spacing:-0.33px;">Oracle</div>
<div class="t" style="left:458.9px;top:303px;font-size:8.5px;line-height:10px;letter-spacing:-0.43px;transform:scaleX(1.000);transform-origin:0px 50%;">Server</div>
<div class="fd" style="left:525px;top:300px;width:92px;height:14.5px;"></div>
<div class="t" style="left:527px;top:303px;font-size:8.5px;line-height:10px;letter-spacing:-0.12px;">localhost</div>
<div class="t" style="left:620.9px;top:303px;font-size:8.5px;line-height:10px;letter-spacing:-0.16px;">Port</div>
<div class="fd" style="left:660px;top:300px;width:92.5px;height:14.5px;"></div>
<div class="t" style="left:662.7px;top:303px;font-size:8.5px;line-height:10px;letter-spacing:-0.43px;transform:scaleX(0.947);transform-origin:0px 50%;">1521</div>
<div class="t" style="left:458.9px;top:321px;font-size:8.5px;line-height:10px;letter-spacing:-0.33px;">Database</div>
<div class="fd" style="left:525px;top:319px;width:92px;height:14.5px;"></div>
<div class="t" style="left:527px;top:321px;font-size:8.5px;line-height:10px;letter-spacing:-0.43px;transform:scaleX(0.873);transform-origin:0px 50%;">ORCL</div>
<div class="t" style="left:458.9px;top:340px;font-size:8.5px;line-height:10px;letter-spacing:-0.37px;">Username</div>
<div class="fd" style="left:525px;top:338px;width:92px;height:14.5px;"></div>
<div class="t" style="left:527.2px;top:340px;font-size:8.5px;line-height:10px;letter-spacing:-0.43px;transform:scaleX(0.895);transform-origin:0px 50%;">SUMMITB</div>
<div class="t" style="left:620.9px;top:340px;font-size:8.5px;line-height:10px;letter-spacing:-0.43px;transform:scaleX(0.993);transform-origin:0px 50%;">Password</div>
<div class="fd" style="left:660px;top:338px;width:71px;height:14.5px;"></div>
<div class="t" style="left:661.8px;top:337px;font-size:14px;line-height:16px;letter-spacing:0.2px;">•••••••</div>
<div style="left:735px;top:337.5px;width:17px;height:15px;background:#cdcdcd;border:1px solid #c4c4c4"></div>
<svg style="left:738px;top:341px;" width="12" height="8" viewBox="0 0 12 8"><path d="M.5 4Q6 -2 11.5 4Q6 10 .5 4Z" fill="#f0f0f0" stroke="#909090"/><circle cx="6" cy="4" r="2.3" fill="#909090"/></svg>
<div class="t" style="left:459.3px;top:366px;font-size:8.5px;line-height:10px;letter-spacing:-0.43px;color:#808080;transform:scaleX(0.848);transform-origin:0px 50%;">URL</div>
<div class="fd" style="left:525px;top:364px;width:323px;height:14.5px;"></div>
<div class="t" style="left:527.41px;top:366px;font-size:8.5px;line-height:10px;letter-spacing:-0.19px;">jdbc:oracle:thin:@localhost:1521:ORCL</div>
<div class="t" style="left:458.9px;top:384px;font-size:8.5px;line-height:10px;letter-spacing:-0.32px;">URL parameter</div>
<div class="fd" style="left:525px;top:382px;width:323px;height:14.5px;"></div>
<div class="btn" style="left:526px;top:408.5px;width:37.5px;height:15.5px;"></div>
<div class="t" style="left:536.3px;top:412px;font-size:8.5px;line-height:10px;letter-spacing:-0.12px;">Edit...</div>
<div style="left:162px;top:597px;width:824px;height:5px;background:#fff"></div>
<div style="left:162px;top:602px;width:824px;height:1px;background:#6a6a6a"></div>
<div style="left:162px;top:603px;width:824px;height:103px;background:#fff"></div>
<div style="left:185px;top:603px;width:24px;height:7px;background:#f4f4f4;border:1px solid #a0a0a0;border-top:none;border-radius:0 0 3px 3px"></div>
<svg style="left:193px;top:603px;" width="8" height="5" viewBox="0 0 8 5"><path d="M.5 .5L4 4L7.5 .5" stroke="#999" fill="none" stroke-width=".9"/></svg>
<div style="left:162px;top:627px;width:824px;height:1px;background:#e0e0e0"></div>
<div style="left:164px;top:610px;width:48px;height:19px;background:#fff;border:1px solid #dcdcdc;border-bottom:none"></div>
<svg style="left:171px;top:613px;" width="12" height="11" viewBox="0 0 12 11"><rect x=".5" y=".5" width="11" height="10" fill="#f4f8fc" stroke="#7a90b0"/><path d="M.5 3.5H11.5M.5 6H11.5M.5 8.5H11.5M3.5 .5V10.5M6.5 .5V10.5M9 .5V10.5" stroke="#9ab0d0" stroke-width=".7"/></svg>
<div class="t" style="left:185.8px;top:614px;font-size:8.5px;line-height:10px;letter-spacing:-0.43px;transform:scaleX(0.951);transform-origin:0px 50%;">S Ord</div>
<div style="left:212px;top:612px;width:48px;height:15px;background:#f0f0f0;border:1px solid #dcdcdc;border-bottom:none"></div>
<svg style="left:217px;top:614px;" width="13" height="12" viewBox="0 0 13 12"><rect x=".5" y=".5" width="9" height="8" fill="#e0d0c0" stroke="#8a7a6a"/><rect x="3.5" y="3.5" width="9" height="8" fill="#f0f4fa" stroke="#8a9ab0"/><rect x="3.5" y="3.5" width="9" height="2" fill="#b8c8dc"/></svg>
<div class="t" style="left:231.3px;top:615px;font-size:8.5px;line-height:10px;letter-spacing:-0.33px;">S Item</div>
<div style="left:260px;top:612px;width:61px;height:15px;background:#f0f0f0;border:1px solid #dcdcdc;border-bottom:none"></div>
<svg style="left:265px;top:614px;" width="13" height="12" viewBox="0 0 13 12"><rect x=".5" y=".5" width="9" height="8" fill="#e0d0c0" stroke="#8a7a6a"/><rect x="3.5" y="3.5" width="9" height="8" fill="#f0f4fa" stroke="#8a9ab0"/><rect x="3.5" y="3.5" width="9" height="2" fill="#b8c8dc"/></svg>
<div class="t" style="left:280.5px;top:615px;font-size:8.5px;line-height:10px;letter-spacing:-0.43px;transform:scaleX(0.993);transform-origin:0px 50%;">S Product</div>
<div style="left:321px;top:612px;width:55px;height:15px;background:#f0f0f0;border:1px solid #dcdcdc;border-bottom:none"></div>
<svg style="left:326px;top:614px;" width="13" height="12" viewBox="0 0 13 12"><rect x=".5" y=".5" width="9" height="8" fill="#e0d0c0" stroke="#8a7a6a"/><rect x="3.5" y="3.5" width="9" height="8" fill="#f0f4fa" stroke="#8a9ab0"/><rect x="3.5" y="3.5" width="9" height="2" fill="#b8c8dc"/></svg>
<div class="t" style="left:340.2px;top:615px;font-size:8.5px;line-height:10px;letter-spacing:-0.43px;transform:scaleX(0.979);transform-origin:0px 50%;">S Image</div>
<div style="left:376px;top:612px;width:60px;height:15px;background:#f0f0f0;border:1px solid #dcdcdc;border-bottom:none"></div>
<svg style="left:381px;top:614px;" width="13" height="12" viewBox="0 0 13 12"><rect x=".5" y="1.5" width="11" height="10" fill="#f8f8f8" stroke="#9a9a9a"/><path d="M4 1.5V11.5M.5 4H11.5" stroke="#c8c8c8" stroke-width=".7"/><circle cx="10.5" cy="2.5" r="2.2" fill="#f0a030"/></svg>
<div class="t" style="left:395.2px;top:615px;font-size:8.5px;line-height:10px;letter-spacing:-0.43px;transform:scaleX(0.994);transform-origin:0px 50%;">NEW table</div>
<svg style="left:168px;top:634px;" width="13" height="13" viewBox="0 0 13 13"><path d="M1.5 11.5L3 8L10 1.5L11.5 3L5 10Z" fill="#e89a30"/><path d="M1.5 11.5L3 8L5 10Z" fill="#f4dcb4"/><path d="M9 2.5L10.5 4" stroke="#b04a2a" stroke-width="1.4"/></svg>
<svg style="left:168px;top:653px;" width="12" height="12" viewBox="0 0 12 12"><rect x="1.5" y=".5" width="10" height="11" rx="1.5" fill="#9cc4f0" stroke="#3a78c8"/><rect x="4" y="3" width="5.5" height="6" fill="#e8f2fc"/><path d="M.5 2.5H3M.5 5H3M.5 7.5H3M.5 10H3" stroke="#3a78c8" stroke-width=".8"/></svg>
<svg style="left:168px;top:672px;" width="12" height="12" viewBox="0 0 12 12"><circle cx="6" cy="6" r="5.5" fill="#d4502a"/><path d="M3.5 3.5L8.5 8.5M8.5 3.5L3.5 8.5" stroke="#fff" stroke-width="2"/></svg>
<div style="left:183px;top:629px;width:1px;height:73px;background:#b0b0b0"></div>
<div style="left:193px;top:635px;width:70px;height:62px;background:#fff;border:1px solid #8a8a8a"></div>
<div style="left:194px;top:636px;width:13px;height:60px;background:#d8d8d8;border-right:1px solid #a0a0a0"></div>
<div style="left:207px;top:636px;width:55px;height:7px;background:#c8c8c8;border-bottom:1px solid #909090"></div>
<svg style="left:194px;top:636px;" width="68" height="60" viewBox="0 0 68 60"><path d="M31.5 0V60M49.5 0V60" stroke="#b0b0b0" stroke-width=".8"/><path d="M13 14.5H68M13 21H68M13 27.5H68M13 34.5H68M13 41H68M13 48H68M13 54.5H68" stroke="#d4d4d4" stroke-width=".8"/><circle cx="6.5" cy="8" r="4.5" fill="#7ccc6c"/><path d="M6.5 5V11M3.5 8H9.5" stroke="#fff" stroke-width="1.6"/><circle cx="6.5" cy="21" r="4.5" fill="#e0a880"/><path d="M4.5 19L8.5 23M8.5 19L4.5 23" stroke="#fff" stroke-width="1.6"/><path d="M2 29H11" stroke="#a0a0a0"/><path d="M4 33H8V36H10.5L6.5 40L2.5 36H4Z" fill="#8ccc8c"/><path transform="translate(17 2)" d="M1.6 0L0 3.5M3.8 0L2.2 3.5M6 0L4.4 3.5M8.2 0L6.6 3.5" stroke="#555" stroke-width="1.1" fill="none"/><path transform="translate(35 2)" d="M1.6 0L0 3.5M3.8 0L2.2 3.5M6 0L4.4 3.5M8.2 0L6.6 3.5" stroke="#555" stroke-width="1.1" fill="none"/><path transform="translate(53 2)" d="M1.6 0L0 3.5M3.8 0L2.2 3.5M6 0L4.4 3.5M8.2 0L6.6 3.5" stroke="#555" stroke-width="1.1" fill="none"/><path transform="translate(17 9.5)" d="M1.6 0L0 3M3.8 0L2.2 3" stroke="#999" stroke-width="1.1" fill="none"/><path transform="translate(35 9.5)" d="M1.6 0L0 3M3.8 0L2.2 3M6 0L4.4 3" stroke="#999" stroke-width="1.1" fill="none"/><path transform="translate(17 16)" d="M1.6 0L0 3M3.8 0L2.2 3M6 0L4.4 3" stroke="#999" stroke-width="1.1" fill="none"/><path transform="translate(35 16)" d="M1.6 0L0 3" stroke="#999" stroke-width="1.1" fill="none"/><path transform="translate(53 16)" d="M1.6 0L0 3M3.8 0L2.2 3M6 0L4.4 3M8.2 0L6.6 3" stroke="#999" stroke-width="1.1" fill="none"/><path transform="translate(17 22.5)" d="M1.6 0L0 3" stroke="#999" stroke-width="1.1" fill="none"/><path transform="translate(17 29.5)" d="M1.6 0L0 3M3.8 0L2.2 3M6 0L4.4 3M8.2 0L6.6 3" stroke="#999" stroke-width="1.1" fill="none"/></svg>
<div style="left:272px;top:637px;width:30px;height:60px;background:#dcdcdc;border:1px solid #a0a0a0;border-radius:2px"></div>
<div style="left:278px;top:634px;width:14px;height:6px;background:#e8e8e8"></div>
<svg style="left:272px;top:634px;" width="30" height="62" viewBox="0 0 30 62"><path transform="translate(7 1.5)" d="M1.6 0L0 3M3.8 0L2.2 3M6 0L4.4 3M8.2 0L6.6 3" stroke="#888" stroke-width="1.1" fill="none"/><path transform="translate(7 10.5)" d="M1.6 0L0 3.5M4 0L2.4 3.5M6.4 0L4.8 3.5M8.8 0L7.2 3.5M11.2 0L9.6 3.5M13.6 0L12 3.5" stroke="#888" stroke-width="1.1" fill="none"/><rect x="6.5" y="19.5" width="17" height="5" fill="#fff" stroke="#8a8a8a"/><path d="M8.5 21V23.5" stroke="#222"/><circle cx="18" cy="42" r="3.8" fill="#cfe4f8" stroke="#9ab4d0" stroke-width="1.2"/><path d="M15.5 45L10 53" stroke="#b87a4a" stroke-width="2.2"/></svg>
<div class="t" style="left:316.1px;top:632px;font-size:8.5px;line-height:10px;letter-spacing:0.01px;font-weight:bold;">Unused Editors</div>
<div style="left:311px;top:642px;width:252px;height:1px;background:#c8c8c8"></div>
<div style="left:311px;top:643px;width:19px;height:54px;background:#f0f0f0"></div>
<div style="left:330px;top:643px;width:1px;height:54px;background:#a0a0a0"></div>
<svg style="left:316.5px;top:648.5px;" width="10" height="8" viewBox="0 0 10 8"><path d="M0 1.500Q5 -.500 10 1.500L6 4.500V8H4V4.500Z" fill="#4a4a4a"/></svg>
<div style="left:335px;top:645px;width:88px;height:14.5px;background:#fff;border:1px solid #9a9a9a"></div>
<div style="left:337px;top:646.5px;width:11.5px;height:11.5px;border:1px solid #6a7a94;border-radius:2.5px;background:#fff"></div>
<div class="t" style="left:339.92px;top:647px;font-size:10px;line-height:11px;font-weight:bold;color:#223;">#</div>
<div class="t" style="left:351.3px;top:647px;font-size:8.5px;line-height:10px;letter-spacing:-0.14px;color:#8a8a8a;">Total</div>
<div style="left:427px;top:645px;width:88px;height:14.5px;background:#fff;border:1px solid #9a9a9a"></div>
<div style="left:429px;top:646.5px;width:11.5px;height:11.5px;border:1px solid #6a7a94;border-radius:2.5px;background:#fff"></div>
<div class="t" style="left:431.92px;top:647px;font-size:10px;line-height:11px;font-weight:bold;color:#223;">#</div>
<div class="t" style="left:443.1px;top:647px;font-size:8.5px;line-height:10px;letter-spacing:-0.29px;color:#8a8a8a;">Payment Type Id</div>
<svg style="left:505px;top:651px;" width="6" height="4" viewBox="0 0 6 4"><path d="M0 0H6L3 3.5Z" fill="#333"/></svg>
<div style="left:519px;top:645px;width:88px;height:14.5px;background:#fff;border:1px solid #9a9a9a"></div>
<div style="left:521px;top:646.5px;width:11.5px;height:11.5px;border:1px solid #6a7a94;border-radius:2.5px;background:#fff"></div>
<div class="t" style="left:523.49px;top:646px;font-size:10.5px;line-height:12px;color:#223;font-family:'Liberation Serif',serif;">T</div>
<div class="t" style="left:534.6px;top:647px;font-size:8.5px;line-height:10px;color:#8a8a8a;">Payment</div>
<div style="left:162px;top:704px;width:918px;height:2px;background:#8c8c8c"></div>
<div style="left:1px;top:704px;width:162px;height:2px;background:#8c8c8c"></div>
<div style="left:563px;top:382px;width:416px;height:321px;background:#c9dcf3;border:1px solid #3c3c3c;border-radius:5px 5px 0 0;border-bottom-color:#1e2a3a"></div>
<div style="left:564px;top:383px;width:414px;height:19px;background:linear-gradient(#9bb5d9,#a5bee0 50%,#b9d0ec);border-radius:4px 4px 0 0"></div>
<div style="left:564px;top:701px;width:414px;height:1px;background:#3fa8dc"></div>
<svg style="left:567px;top:386px;" width="12" height="12" viewBox="0 0 12 12"><path d="M0 0H3.8L6 3.3L8.2 0H12L7.9 5.9L12 12H8.2L6 8.6L3.8 12H0L4.1 5.9Z" fill="#f28a0e"/></svg>
<div class="t" style="left:581.4px;top:387px;font-size:9px;line-height:10px;letter-spacing:-0.15px;">Edit database connection</div>
<div style="left:931.5px;top:386px;width:21.5px;height:13.5px;background:linear-gradient(#aec7e6,#b9d0ec 40%,#a3bfe2 46%,#a9c4e5 70%,#c3d8f1);border:1px solid #8196b4;border-radius:2.5px;box-shadow:inset 0 0 0 1px rgba(255,255,255,.35)"></div>
<div style="left:938.5px;top:389px;width:8px;height:6.5px;background:#5a5a66;border:1px solid #666;box-shadow:inset 0 0 0 1.4px #fff;border-radius:1px"></div>
<div style="left:954.5px;top:386px;width:21.5px;height:13.5px;background:linear-gradient(#e6a574,#ebb58c 38%,#d84a1e 42%,#d84a1e 64%,#ecb890 68%,#f0c09a);border:1px solid #7e5238;border-radius:2.5px;box-shadow:inset 0 0 0 1px rgba(255,255,255,.35)"></div>
<svg style="left:960.5px;top:388px;" width="10" height="9" viewBox="0 0 10 9"><path d="M1.5 1L8.5 8M8.5 1L1.5 8" stroke="#6a6a6a" stroke-width="3.2"/><path d="M1.5 1L8.5 8M8.5 1L1.5 8" stroke="#fff" stroke-width="1.8"/></svg>
<div style="left:568px;top:402px;width:406px;height:299px;background:#f0f0f0"></div>
<div style="left:568px;top:402px;width:406px;height:45px;background:linear-gradient(100deg,#fff 80%,#e8e8e8)"></div>
<div style="left:568px;top:446.5px;width:406px;height:1px;background:#9c9c9c"></div>
<div style="left:568px;top:447.5px;width:406px;height:1px;background:#e4e4e4"></div>
<div class="t" style="left:573.4px;top:409px;font-size:11.7px;line-height:13px;letter-spacing:-0.53px;font-weight:bold;">Edit database connection</div>
<svg style="left:708px;top:409px;" width="12" height="12" viewBox="0 0 12 12"><path d="M1 10.5L9.5 1.5L11 3L2.5 11Z" fill="#e8b868"/><path d="M1 10.5L2 9L3 10Z" fill="#a86a2a"/><circle cx="3.5" cy="8" r="1" fill="#f09030"/></svg>
<div class="t" style="left:576.4px;top:431px;font-size:8.5px;line-height:10px;letter-spacing:-0.17px;">This wizard helps you to edit an existing database connection.</div>
<div class="t" style="left:576.4px;top:454px;font-size:8.5px;line-height:10px;letter-spacing:-0.22px;">Please enter the necessary parameters for your database system.</div>
<svg style="left:853px;top:408px;" width="11" height="13" viewBox="0 0 11 13"><circle cx="5.5" cy="7.5" r="4.3" fill="#f4f4f4" stroke="#8a8a8a" stroke-width="1.2"/><rect x="4" y=".5" width="3" height="2.5" fill="#666"/><path d="M5.5 7.5V4.5" stroke="#4a7ac0" stroke-width="1.2"/></svg>
<svg style="left:874px;top:411px;" width="12" height="9" viewBox="0 0 12 9"><rect x="0" y="1" width="12" height="8" fill="#b8b8b8"/><rect x="0" y="0" width="3" height="9" fill="#222"/><rect x="6" y="3" width="5" height="3.5" fill="#eee"/><path d="M7 4.5L8.5 6L10 4.500Z" fill="#333"/></svg>
<div class="t" style="left:895.7px;top:411px;font-size:8.8px;line-height:10px;letter-spacing:-0.44px;font-weight:bold;color:#1c4a86;transform:scaleX(0.966);transform-origin:0px 50%;">de</div>
<div style="left:911px;top:406px;width:19px;height:18px;background:#cce4f7;border:1px solid #3c6cb8"></div>
<div class="t" style="left:915.6px;top:411px;font-size:8.8px;line-height:10px;letter-spacing:-0.44px;font-weight:bold;color:#1c4a86;transform:scaleX(0.977);transform-origin:0px 50%;">en</div>
<svg style="left:934px;top:406px;" width="32" height="37" viewBox="0 0 32 37"><defs><linearGradient id="cy" x1="0" x2="1"><stop offset="0" stop-color="#2a7ac8"/><stop offset=".45" stop-color="#8ccaf4"/><stop offset="1" stop-color="#1a5aa0"/></linearGradient><linearGradient id="cap" x1="0" x2="1"><stop offset="0" stop-color="#8a8a8a"/><stop offset=".5" stop-color="#e8e8e8"/><stop offset="1" stop-color="#6a6a6a"/></linearGradient></defs><rect x="8" y="6" width="21" height="26" fill="url(#cy)"/><ellipse cx="18.5" cy="32" rx="10.5" ry="3" fill="url(#cap)"/><rect x="7" y="3" width="23" height="5" fill="url(#cap)"/><ellipse cx="18.5" cy="3.5" rx="11.5" ry="2.8" fill="#d8d8d8" stroke="#8a8a8a" stroke-width=".6"/><ellipse cx="18.5" cy="8.5" rx="10.5" ry="2" fill="#1a3a6a"/><path d="M2 34L4 29L17 17L19 19L6 31.5Z" fill="#e8b060"/><path d="M2 34L4 29L6 31.5Z" fill="#f4e0c0"/><path d="M15.5 18.5L17.5 20.5" stroke="#d8402a" stroke-width="2"/></svg>
<div class="t" style="left:576.4px;top:477px;font-size:8.5px;line-height:10px;letter-spacing:-0.43px;transform:scaleX(0.953);transform-origin:0px 50%;">Name</div>
<div class="fy" style="left:642px;top:475px;width:92px;height:14.5px;"></div>
<div class="t" style="left:644.1px;top:477px;font-size:8.5px;line-height:10px;letter-spacing:-0.23px;">oracle19csummitb</div>
<div class="t" style="left:576.4px;top:496px;font-size:8.5px;line-height:10px;letter-spacing:-0.37px;">Database system</div>
<div class="fy" style="left:642px;top:493px;width:92px;height:15px;border-color:#7a7a7a;"></div>
<div style="left:719.5px;top:494px;width:13.5px;height:13px;background:#fff"></div>
<svg style="left:722.5px;top:498.3px;" width="7" height="4.5" viewBox="0 0 7 4.5"><path d="M.4 .4L3.500 3.700L6.600 .4" stroke="#4a4a4a" fill="none" stroke-width="1"/></svg>
<div class="t" style="left:644.8px;top:496px;font-size:8.5px;line-height:10px;letter-spacing:-0.43px;transform:scaleX(0.956);transform-origin:0px 50%;">PostgreSQL</div>
<div class="t" style="left:576.4px;top:521px;font-size:8.5px;line-height:10px;letter-spacing:-0.43px;transform:scaleX(1.000);transform-origin:0px 50%;">Server</div>
<div class="fy" style="left:642px;top:519px;width:92px;height:15px;"></div>
<div style="left:643.6px;top:521.4px;width:34.3px;height:10.4px;background:#0a5fc8"></div>
<div class="t" style="left:644.8px;top:521px;font-size:8.5px;line-height:10px;letter-spacing:-0.17px;color:#fff;">localhost</div>
<div class="t" style="left:737.7px;top:521px;font-size:8.5px;line-height:10px;letter-spacing:-0.16px;">Port</div>
<div class="f" style="left:777px;top:519px;width:93px;height:15px;"></div>
<div class="t" style="left:779.2px;top:521px;font-size:8.5px;line-height:10px;letter-spacing:-0.37px;">5432</div>
<div class="t" style="left:576.4px;top:540px;font-size:8.5px;line-height:10px;letter-spacing:-0.33px;">Database</div>
<div class="f" style="left:642px;top:537.5px;width:92px;height:15px;"></div>
<div class="t" style="left:644.1px;top:540px;font-size:8.5px;line-height:10px;letter-spacing:-0.24px;">postgres</div>
<div class="t" style="left:576.4px;top:558px;font-size:8.5px;line-height:10px;letter-spacing:-0.43px;transform:scaleX(0.991);transform-origin:0px 50%;">Username</div>
<div class="fy" style="left:642px;top:556px;width:92px;height:14.5px;"></div>
<div class="t" style="left:644.1px;top:558px;font-size:8.5px;line-height:10px;letter-spacing:-0.43px;transform:scaleX(0.898);transform-origin:0px 50%;">SUMMITB</div>
<div class="t" style="left:737.7px;top:558px;font-size:8.5px;line-height:10px;letter-spacing:-0.43px;transform:scaleX(0.993);transform-origin:0px 50%;">Password</div>
<div class="fy" style="left:777px;top:556px;width:71px;height:14.5px;"></div>
<div class="t" style="left:778.8px;top:555px;font-size:14px;line-height:16px;letter-spacing:0.2px;">•••••••</div>
<div style="left:852px;top:555.5px;width:17.5px;height:15.5px;background:#e1e1e1;border:1px solid #adadad"></div>
<svg style="left:855px;top:559px;" width="12" height="8" viewBox="0 0 12 8"><path d="M.5 4Q6 -2 11.5 4Q6 10 .5 4Z" fill="#fff" stroke="#111"/><circle cx="6" cy="4" r="2.4" fill="#111"/></svg>
<div class="t" style="left:576.8px;top:585px;font-size:8.5px;line-height:10px;letter-spacing:-0.43px;transform:scaleX(0.848);transform-origin:0px 50%;">URL</div>
<div class="fd" style="left:642px;top:582px;width:302px;height:15px;"></div>
<div class="t" style="left:644.31px;top:585px;font-size:8.5px;line-height:10px;letter-spacing:-0.08px;">jdbc:postgresql://localhost:5432/postgres</div>
<svg style="left:950px;top:583px;" width="13" height="13" viewBox="0 0 13 13"><path d="M1.5 11.5L3 8L10 1.5L11.5 3L5 10Z" fill="#e89a30"/><path d="M1.5 11.5L3 8L5 10Z" fill="#f4dcb4"/><path d="M9 2.5L10.5 4" stroke="#b04a2a" stroke-width="1.4"/></svg>
<div class="t" style="left:576.4px;top:603px;font-size:8.5px;line-height:10px;letter-spacing:-0.42px;">URL parameter</div>
<div class="f" style="left:642px;top:601px;width:324px;height:14.5px;"></div>
<div class="t" style="left:576.4px;top:625px;font-size:8.5px;line-height:10px;letter-spacing:-0.03px;">Test result</div>
<div style="left:576px;top:639.5px;width:390px;height:27px;border:1px solid #9a9a9a;background:#f0f0f0"></div>
<div style="left:568px;top:674px;width:406px;height:1px;background:#a0a0a0"></div>
<div style="left:568px;top:675px;width:406px;height:26px;background:#fff"></div>
<div class="btn" style="left:573px;top:679.5px;width:96.5px;height:16px;"></div>
<svg style="left:582px;top:682px;" width="11" height="11" viewBox="0 0 11 11"><circle cx="5.5" cy="5.5" r="5.5" fill="#3a86dc"/><path d="M4 2.5L8.5 5.5L4 8.5Z" fill="#fff"/></svg>
<div class="t" style="left:601.7px;top:682px;font-size:8.5px;line-height:10px;letter-spacing:-0.31px;">Test Connection</div>
<div style="left:874.5px;top:679.5px;width:43px;height:16px;background:#cccccc;border:1px dotted #e0e0e0"></div>
<div class="t" style="left:884.4px;top:682px;font-size:8.5px;line-height:10px;letter-spacing:-0.3px;color:#838383;">Finish</div>
<div style="left:922px;top:679.5px;width:47px;height:16px;background:#e5f1fb;border:1px solid #0078d7"></div>
<div class="t" style="left:932.8px;top:682px;font-size:8.5px;line-height:10px;letter-spacing:-0.43px;transform:scaleX(0.982);transform-origin:0px 50%;">Cancel</div>
<div style="left:979px;top:602px;width:8px;height:104px;overflow:hidden"><div style="left:0;top:0;width:8px;height:6px;background:#c4c4c4;border-top:1px solid #8a8a8a"></div><div style="left:0;top:12px;width:2.5px;height:10px;background:#8ab4e0"></div><div style="left:-3px;top:30px;width:6px;height:12px;background:#5a6a8a;border-radius:50%"></div></div>
<div style="left:987px;top:87px;width:93px;height:619px;background:linear-gradient(#5a6f7e,#4d616f 40%,#3c4c59 80%,#37464f);border-left:1px solid #26323c"></div>
<div style="left:981px;top:79px;width:99px;height:9px;background:#f5830b"></div>
<svg style="left:981px;top:87px;" width="7" height="5" viewBox="0 0 7 5"><path d="M1 0H7V4Z" fill="#c8600a"/></svg>
<div style="left:1058px;top:79px;width:17px;height:15px;background:#f5830b;border-radius:0 0 3px 3px"></div>
<div class="t" style="left:1030.3px;top:80px;font-size:6.6px;line-height:7px;letter-spacing:0.26px;font-weight:bold;color:#4a5878;transform:scaleX(1.123);transform-origin:0px 50%;">VISION</div>
<svg style="left:1061px;top:80px;" width="11" height="11" viewBox="0 0 12 12"><path d="M0 0H3.8L6 3.3L8.2 0H12L7.9 5.9L12 12H8.2L6 8.6L3.8 12H0L4.1 5.9Z" fill="#fff"/></svg>
<div style="left:997px;top:105px;width:75px;height:37px;background:#cce4f7;border:1px solid #2c5aa8"></div>
<div class="t" style="left:1022.6px;top:129px;font-size:8.5px;line-height:10px;letter-spacing:-0.08px;font-weight:bold;">Finish</div>
<svg style="left:1026.5px;top:108px" width="16" height="16" viewBox="0 0 16 16"><path d="M.5 4V.5H4M12 .5H15.5V4M15.5 12V15.5H12M4 15.5H.5V12" stroke="#f0a050" stroke-width="1.4" fill="none"/><rect x="2" y="2" width="12" height="12" fill="#d8dce0"/><circle cx="8" cy="8" r="5.2" fill="#fff" stroke="#2aa02a" stroke-width="1.3"/><path d="M6.5 5.5L10.5 8L6.5 10.5Z" fill="#2aa02a"/></svg>
<div style="left:997px;top:151px;width:75px;height:36px;background:#e1e1e1;border:1px solid #d0d0d0"></div>
<div class="t" style="left:1017.5px;top:174px;font-size:8.5px;line-height:10px;letter-spacing:-0.19px;">Workflow</div>
<svg style="left:1026.5px;top:154px" width="16" height="16" viewBox="0 0 16 16"><path d="M2 2.5H12.5V8H3.5V13.5H14" stroke="#3a86dc" stroke-width="2.2" fill="none"/><rect x="1" y="1" width="4" height="3" fill="#3a86dc"/><rect x="11" y="12" width="4" height="3" fill="#3a86dc"/></svg>
<div style="left:996px;top:197px;width:80px;height:1px;background:#8494a0"></div>
<div style="left:997px;top:207.5px;width:75px;height:36.5px;background:#e1e1e1;border:1px solid #d0d0d0"></div>
<div class="t" style="left:1013.2px;top:231px;font-size:8.5px;line-height:10px;letter-spacing:-0.43px;transform:scaleX(0.982);transform-origin:0px 50%;">New Screen</div>
<svg style="left:1025.5px;top:210.5px" width="18" height="16" viewBox="0 0 18 16"><rect x=".5" y="1.5" width="16" height="13" fill="#f8f8f8" stroke="#8a8a8a"/><rect x="1" y="2" width="15" height="2" fill="#c8d4e4"/><circle cx="13.5" cy="4" r="3.5" fill="#f0a030"/><circle cx="13.5" cy="4" r="1.2" fill="#fbe0b0"/></svg>
<div style="left:997px;top:253px;width:75px;height:35.5px;background:#e1e1e1;border:1px solid #d0d0d0"></div>
<div class="t" style="left:1019.7px;top:276px;font-size:8.5px;line-height:10px;letter-spacing:-0.24px;">Reports</div>
<svg style="left:1026.5px;top:256px" width="16" height="17" viewBox="0 0 16 17"><path d="M3 1H9V15H3Z" fill="#e8e8e8" stroke="#c0c0c0"/><path d="M9 8L15 12L9 15Z" fill="#c8c8c8"/><circle cx="5.5" cy="7" r="1.5" fill="#f08020"/><circle cx="5.5" cy="12" r="1.5" fill="#f08020"/><rect x="4" y="2.5" width="3" height="1.5" fill="#444"/></svg>
<div style="left:997px;top:297.5px;width:75px;height:35.5px;background:#e1e1e1;border:1px solid #d0d0d0"></div>
<div class="t" style="left:1024.3px;top:320px;font-size:8.5px;line-height:10px;letter-spacing:-0.43px;transform:scaleX(0.961);transform-origin:0px 50%;">Menu</div>
<svg style="left:1027.5px;top:298.5px" width="14" height="18" viewBox="0 0 14 18"><rect x="1.5" y="2.5" width="11" height="14" fill="#f8f8f8" stroke="#b0b0b0"/><rect x="1" y="1" width="7" height="2.5" fill="#3a86dc"/><path d="M3.5 6.5H8M3.5 8.5H9M3.5 12H8M3.5 14H10" stroke="#888" stroke-width=".8"/></svg>
<div style="left:997px;top:342.5px;width:75px;height:35.5px;background:#e1e1e1;border:1px solid #d0d0d0"></div>
<div class="t" style="left:1011.9px;top:366px;font-size:8.5px;line-height:10px;letter-spacing:-0.19px;">Settings</div>
<svg style="left:1019.5px;top:344.5px" width="16" height="17" viewBox="0 0 16 17"><rect x=".5" y=".5" width="15" height="15.5" fill="#fcfcfc" stroke="#b0a090"/><rect x="1" y="1" width="14" height="3.5" fill="#f0a850"/><path d="M1 8H15M1 11.5H15M12 4.5V16" stroke="#c8c8c8" stroke-width=".8"/></svg>
<div style="left:1058px;top:343.5px;width:1px;height:33.5px;background:#b8b8b8"></div>
<svg style="left:1062px;top:359.25px;" width="6.5" height="3.7" viewBox="0 0 6.5 3.7"><path d="M0 0H6.500L3.250 3.700Z" fill="#000"/></svg>
<div style="left:996px;top:388px;width:80px;height:1px;background:#8494a0"></div>
<div style="left:997px;top:399px;width:75px;height:36px;background:#e1e1e1;border:1px solid #d0d0d0"></div>
<div class="t" style="left:1006.4px;top:422px;font-size:8.5px;line-height:10px;letter-spacing:-0.37px;">Documents</div>
<svg style="left:1019.5px;top:401px" width="16" height="17" viewBox="0 0 16 17"><rect x="2.5" y=".5" width="13" height="15.5" rx="1" fill="#9cc4f0" stroke="#4a80c8"/><rect x="5" y="3" width="8.5" height="9" fill="#e8f2fc"/><path d="M1 2.5H4M1 5H4M1 7.5H4M1 10H4M1 12.5H4" stroke="#4a6a9a" stroke-width=".9"/><path d="M7 6.5H12M7 8.5H12" stroke="#8a9ab0" stroke-width=".8"/></svg>
<div style="left:1058px;top:400px;width:1px;height:34px;background:#b8b8b8"></div>
<svg style="left:1062px;top:416px;" width="6.5" height="3.7" viewBox="0 0 6.5 3.7"><path d="M0 0H6.500L3.250 3.700Z" fill="#000"/></svg>
<div style="left:997px;top:661px;width:75px;height:36px;background:#e1e1e1;border:1px solid #d0d0d0"></div>
<div class="t" style="left:1013.3px;top:684px;font-size:8.5px;line-height:10px;letter-spacing:-0.31px;">Switch User</div>
<svg style="left:1010.5px;top:663px" width="48" height="18" viewBox="0 0 48 18"><circle cx="7" cy="4" r="3.2" fill="#9a9a9a"/><path d="M1 17Q1 8 7 8Q13 8 13 17Z" fill="#a8a8a8"/><path d="M7 9V15" stroke="#333" stroke-width="1.5"/><circle cx="41" cy="4" r="3.2" fill="#8a7a6a"/><path d="M35 17Q35 8 41 8Q47 8 47 17Z" fill="#f08820"/><path d="M17 8A7 7 0 0 1 30 6" stroke="#3cb43c" stroke-width="3" fill="none"/><path d="M31 10A7 7 0 0 1 18 12" stroke="#3cb43c" stroke-width="3" fill="none"/><path d="M27 3L33 6L28 10Z" fill="#3cb43c"/><path d="M21 15L15 12L20 8Z" fill="#3cb43c"/></svg>
</body></html>
